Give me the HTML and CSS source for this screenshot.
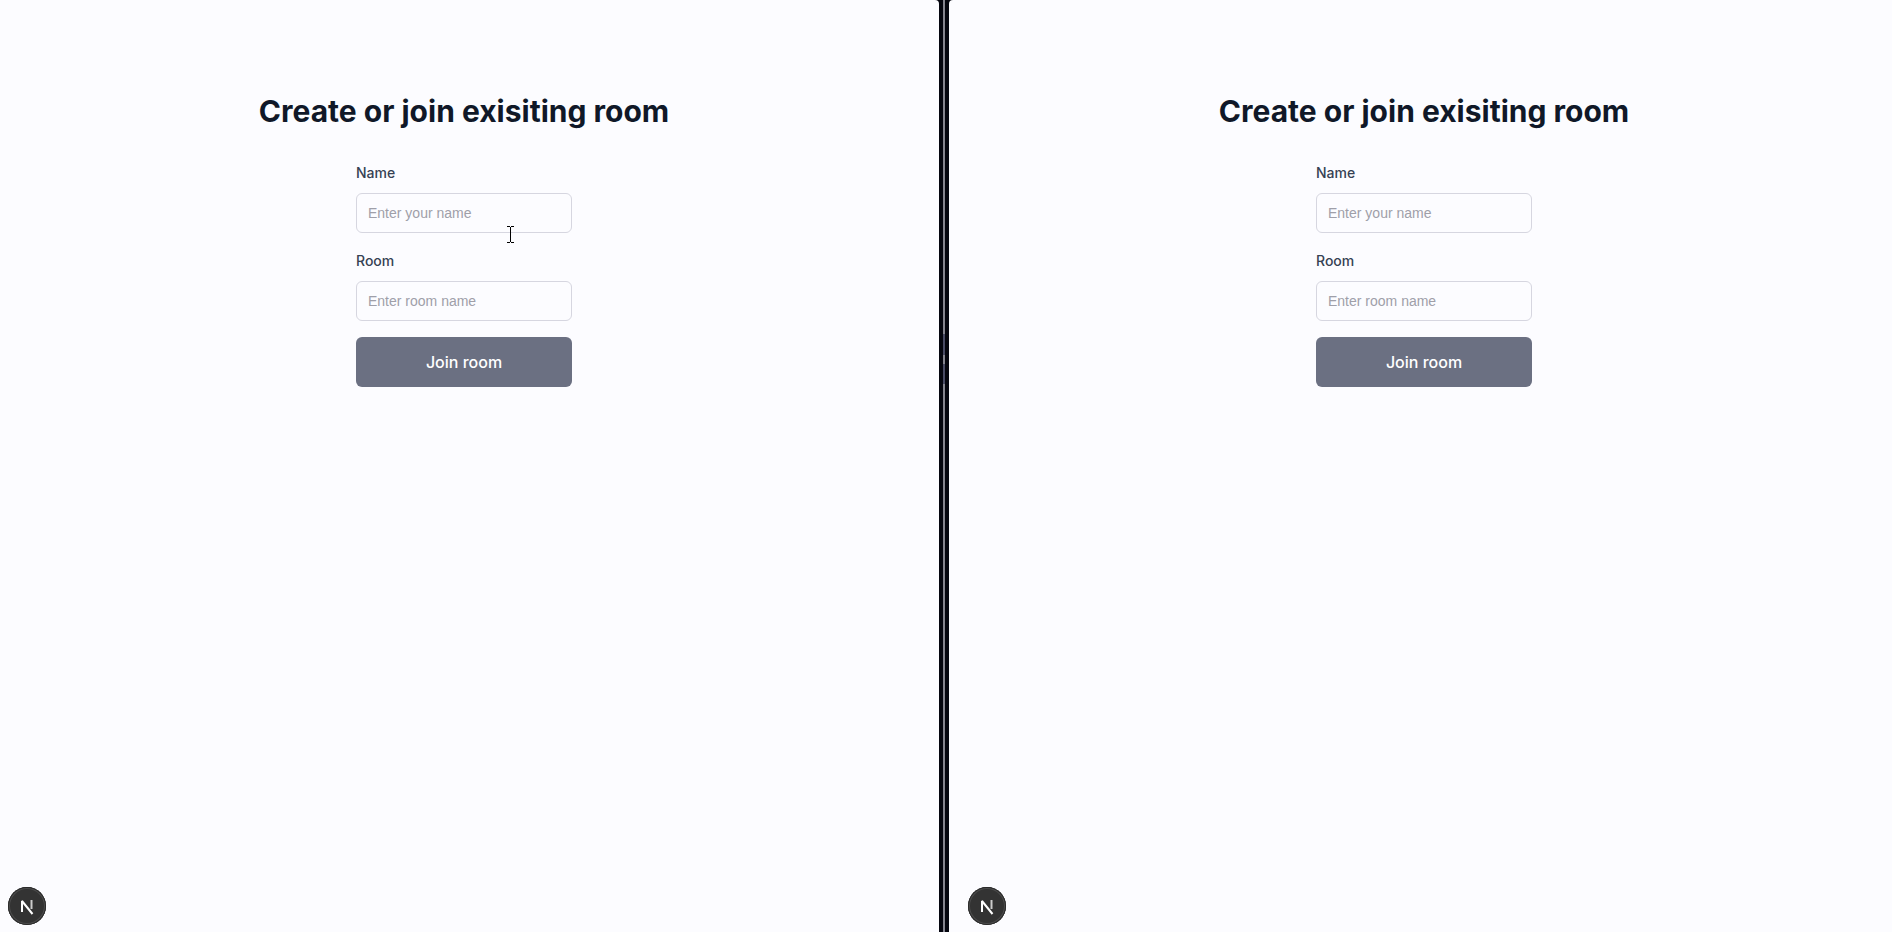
FILE: index.html
```html
<!DOCTYPE html>
<html lang="en">
<head>
    <meta charset="UTF-8">
    <meta name="viewport" content="width=device-width, initial-scale=1.0">
    <title>Create or join room</title>
    <link rel="stylesheet" href="styles.css">
</head>
<body>
    <!-- Left window -->
    <main class="pane pane-left">
        <h1>Create or join exisiting room</h1>
        <form class="room-form">
            <label for="name-left">Name</label>
            <input type="text" id="name-left" placeholder="Enter your name">
            <label for="room-left">Room</label>
            <input type="text" id="room-left" placeholder="Enter room name">
            <button type="button" class="join">Join room</button>
        </form>
        <button type="button" class="dev-badge" aria-label="Dev tools">
            <svg width="38" height="38" viewBox="0 0 38 38" fill="none">
                <path d="M14 25V14L24.5 27" stroke="#fff" stroke-width="2" stroke-linejoin="bevel"/>
                <path d="M23.5 13V22" stroke="#ccc" stroke-width="2"/>
            </svg>
        </button>
        <svg class="cursor" width="7" height="17" viewBox="0 0 7 17" fill="none" stroke="#000">
            <path d="M0 .5H3M4 .5H7M3.5 1V16M0 16.5H3M4 16.5H7"/>
        </svg>
    </main>

    <!-- Gap between the windows -->
    <div class="divider">
        <div class="divider-line"></div>
    </div>

    <!-- Right window -->
    <section class="pane pane-right">
        <h1>Create or join exisiting room</h1>
        <form class="room-form">
            <label for="name-right">Name</label>
            <input type="text" id="name-right" placeholder="Enter your name">
            <label for="room-right">Room</label>
            <input type="text" id="room-right" placeholder="Enter room name">
            <button type="button" class="join">Join room</button>
        </form>
        <button type="button" class="dev-badge" aria-label="Dev tools">
            <svg width="38" height="38" viewBox="0 0 38 38" fill="none">
                <path d="M14 25V14L24.5 27" stroke="#fff" stroke-width="2" stroke-linejoin="bevel"/>
                <path d="M23.5 13V22" stroke="#ccc" stroke-width="2"/>
            </svg>
        </button>
    </section>
</body>
</html>
```
FILE: styles.css
```css
* {
    box-sizing: border-box;
}

body {
    margin: 0;
    display: flex;
    min-height: 100vh;
    background-color: #05060f;
    font-family: Inter, "Liberation Sans", sans-serif;
    color: #101828;
}

.pane {
    position: relative;
    display: flex;
    flex-direction: column;
    align-items: center;
    padding-top: 93px;
    background-color: #fcfcff;
}

.pane-left {
    width: calc(50% - 7px);
    padding-right: 11px;
    border-top-right-radius: 4px;
}

.pane-right {
    flex: 1;
    padding-left: 7px;
    border-top-left-radius: 4px;
}

h1 {
    margin: 0 0 32px;
    font-size: 30px;
    line-height: 36px;
    font-weight: 700;
}

.room-form {
    display: flex;
    flex-direction: column;
    width: 216px;
}

label {
    margin-bottom: 8px;
    font-size: 14px;
    line-height: 24px;
    font-weight: 500;
    color: #364153;
}

input {
    height: 40px;
    margin: 0 0 16px;
    padding: 0 11px;
    border: 1px solid #d6d6e0;
    border-radius: 6px;
    background: transparent;
    font-family: "Liberation Sans", Arial, sans-serif;
    font-size: 14px;
    color: #101828;
}

input::placeholder {
    color: #9f9fa9;
}

.join {
    height: 50px;
    border: none;
    border-radius: 6px;
    background-color: #6b7082;
    font-family: inherit;
    font-size: 16px;
    font-weight: 500;
    color: #fff;
}

.dev-badge {
    position: absolute;
    left: 8px;
    bottom: 7px;
    width: 38px;
    height: 38px;
    padding: 0;
    border: none;
    border-radius: 50%;
    background-color: #333;
    box-shadow: inset 0 0 0 1px #2a2a2a, inset 0 0 0 2px #4c4c4c;
}

.pane-right .dev-badge {
    left: 19px;
}

.dev-badge svg {
    display: block;
}

.cursor {
    position: absolute;
    left: 507px;
    top: 226px;
}

.divider {
    display: flex;
    justify-content: center;
    width: 10px;
}

.divider-line {
    width: 2px;
    background: linear-gradient(#85858f 334px, #4a4c66 334px, #4a4c66 355px, #85858f 355px, #85858f 364px, #4a4c66 364px, #4a4c66 384px, #85858f 384px);
}
```
